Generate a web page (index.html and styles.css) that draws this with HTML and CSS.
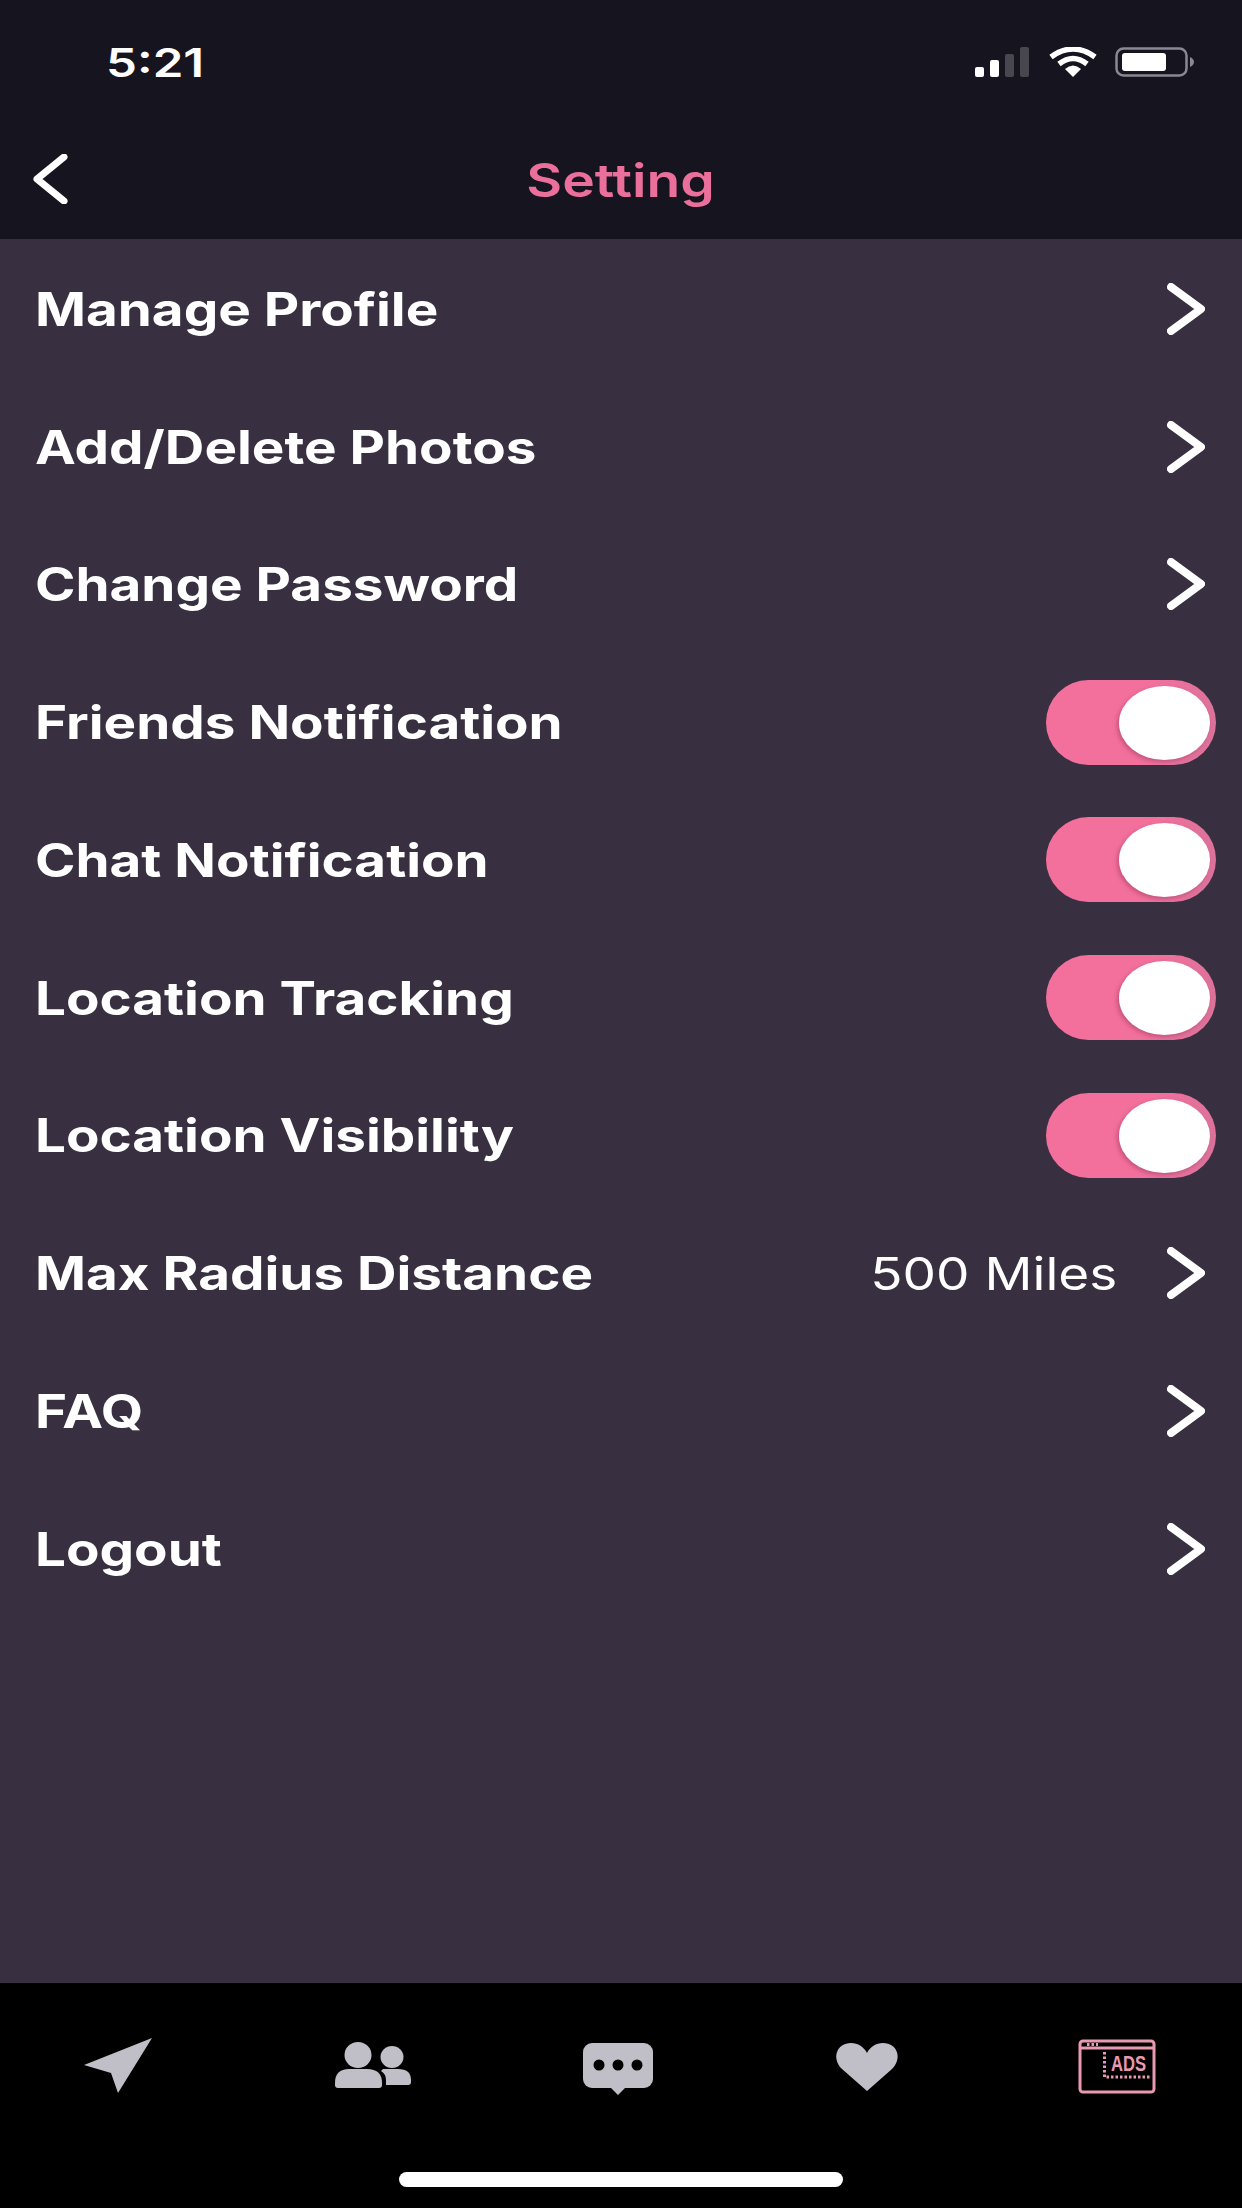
FILE: index.html
```html
<!DOCTYPE html>
<html lang="en">
<head>
    <meta charset="UTF-8">
    <meta name="viewport" content="width=device-width, initial-scale=1.0">
    <title>Setting</title>
    <link rel="stylesheet" href="styles.css">
</head>
<body>
    <div class="app">
        <header class="header">
            <div class="status-bar">
                <span class="time">5:21</span>
                <div class="status-icons">
                    <svg class="signal" viewBox="0 0 56 30">
                        <rect x="0" y="20" width="9" height="10" rx="2" fill="#fff"/>
                        <rect x="15" y="13" width="9" height="17" rx="2" fill="#fff"/>
                        <rect x="30" y="7" width="9" height="23" rx="2" fill="#48464f"/>
                        <rect x="45" y="0" width="9" height="30" rx="2" fill="#48464f"/>
                    </svg>
                    <svg class="wifi" viewBox="0 0 50 30">
                        <path d="M3 10 Q25 -6 47 10" fill="none" stroke="#fff" stroke-width="5.5"/>
                        <path d="M11 17 Q25 6 39 17" fill="none" stroke="#fff" stroke-width="5.5"/>
                        <path d="M17 22 Q25 15 33 22 L25 30 Z" fill="#fff"/>
                    </svg>
                    <svg class="battery" viewBox="0 0 80 30">
                        <rect x="1.5" y="1.5" width="70" height="27" rx="7" fill="none" stroke="#8a8890" stroke-width="2.5"/>
                        <rect x="7" y="6" width="44" height="18" rx="3" fill="#fff"/>
                        <path d="M75 10 Q79 12 79 15 Q79 18 75 20 Z" fill="#8a8890"/>
                    </svg>
                </div>
            </div>
            <nav class="nav-bar">
                <svg class="back" viewBox="0 0 36 50">
                    <path d="M32 3 L5 25 L32 47" fill="none" stroke="#fff" stroke-width="7" stroke-linecap="round" stroke-linejoin="round"/>
                </svg>
                <h1 class="title">Setting</h1>
            </nav>
        </header>

        <main class="settings">
            <div class="row">
                <span class="label">Manage Profile</span>
                <svg class="chevron" viewBox="0 0 38 52"><path d="M4 4 L34 26 L4 48"/></svg>
            </div>
            <div class="row">
                <span class="label">Add/Delete Photos</span>
                <svg class="chevron" viewBox="0 0 38 52"><path d="M4 4 L34 26 L4 48"/></svg>
            </div>
            <div class="row">
                <span class="label">Change Password</span>
                <svg class="chevron" viewBox="0 0 38 52"><path d="M4 4 L34 26 L4 48"/></svg>
            </div>
            <div class="row">
                <span class="label">Friends Notification</span>
                <div class="toggle"><div class="knob"></div></div>
            </div>
            <div class="row">
                <span class="label">Chat Notification</span>
                <div class="toggle"><div class="knob"></div></div>
            </div>
            <div class="row">
                <span class="label">Location Tracking</span>
                <div class="toggle"><div class="knob"></div></div>
            </div>
            <div class="row">
                <span class="label">Location Visibility</span>
                <div class="toggle"><div class="knob"></div></div>
            </div>
            <div class="row">
                <span class="label">Max Radius Distance</span>
                <span class="value">500 Miles</span>
                <svg class="chevron" viewBox="0 0 38 52"><path d="M4 4 L34 26 L4 48"/></svg>
            </div>
            <div class="row">
                <span class="label">FAQ</span>
                <svg class="chevron" viewBox="0 0 38 52"><path d="M4 4 L34 26 L4 48"/></svg>
            </div>
            <div class="row">
                <span class="label">Logout</span>
                <svg class="chevron" viewBox="0 0 38 52"><path d="M4 4 L34 26 L4 48"/></svg>
            </div>
        </main>

        <footer class="tab-bar">
            <div class="tabs">
                <svg class="tab-icon" viewBox="0 0 90 60">
                    <path class="fill" d="M79 2 L11 29 L38 37 L45 57 Z"/>
                </svg>
                <svg class="tab-icon" viewBox="0 0 90 60">
                    <ellipse class="fill" cx="35" cy="19" rx="13.5" ry="13"/>
                    <ellipse class="fill" cx="69" cy="21" rx="11.5" ry="11"/>
                    <path class="fill" d="M12 47 Q12 33 26 33 L44 33 Q59 33 59 47 L59 49 Q59 52 56 52 L15 52 Q12 52 12 49 Z"/>
                    <path class="fill" d="M60 33 L75 33 Q88 33 88 44 L88 46 Q88 49 85 49 L63 49 L63 44 Q63 38 58 35 Z"/>
                </svg>
                <svg class="tab-icon" viewBox="0 0 90 60">
                    <rect class="fill" x="10" y="7" width="70" height="45" rx="9"/>
                    <path class="fill" d="M37 51 L53 51 L45 59 Z"/>
                    <circle cx="26" cy="29" r="5.5"/>
                    <circle cx="45" cy="29" r="5.5"/>
                    <circle cx="64" cy="29" r="5.5"/>
                </svg>
                <svg class="tab-icon" viewBox="0 0 90 60">
                    <path class="fill" d="M45 55 L20 33 C9 22 15 7 29 7 C36 7 42 11 45 17 C48 11 54 7 61 7 C75 7 81 22 70 33 Z"/>
                </svg>
                <svg class="tab-icon" viewBox="0 0 90 60">
                    <rect class="ads-line" x="8" y="5" width="74" height="51" rx="3"/>
                    <path class="ads-line" d="M8 12 L82 12"/>
                    <path class="ads-dots" d="M15 8.5 L26 8.5"/>
                    <path class="ads-dots" d="M32.5 16 L32.5 41 L78 41"/>
                    <text class="ads-text" x="39" y="35" textLength="35" lengthAdjust="spacingAndGlyphs">ADS</text>
                </svg>
            </div>
            <div class="home-indicator"></div>
        </footer>
    </div>
</body>
</html>
```

FILE: styles.css
```css
* {
    box-sizing: border-box;
}

body {
    margin: 0;
    background-color: #000;
    font-family: Inter, 'Liberation Sans', sans-serif;
    color: #fff;
}

.app {
    display: flex;
    flex-direction: column;
    width: 1242px;
    height: 2208px;
    overflow: hidden;
}

.header {
    height: 239px;
    background-color: #16141f;
}

.status-bar {
    display: flex;
    justify-content: space-between;
    align-items: center;
    height: 124px;
    padding: 0 47px 0 106px;
}

/* the reference is stretched sideways, so the text is too */
.time {
    font-size: 40px;
    font-weight: 600;
    transform: scaleX(1.23);
    transform-origin: left center;
}

.status-icons {
    display: flex;
    align-items: center;
    gap: 17px;
}

.signal {
    width: 56px;
    height: 30px;
}

.wifi {
    width: 50px;
    height: 30px;
}

.battery {
    width: 80px;
    height: 30px;
}

.nav-bar {
    position: relative;
    display: flex;
    justify-content: center;
    align-items: center;
    height: 112px;
}

.back {
    position: absolute;
    left: 32px;
    top: 30px;
    width: 36px;
    height: 50px;
}

.title {
    margin: 0;
    font-size: 46px;
    font-weight: 600;
    color: #eb6f9b;
    transform: scaleX(1.2);
}

.settings {
    flex: 1;
    padding-top: 1px;
    background-color: #382f40;
}

.row {
    display: flex;
    align-items: center;
    height: 137.75px;
    padding: 0 26px 0 35px;
}

.label {
    flex: 1;
    font-size: 46px;
    font-weight: 700;
    transform: scaleX(1.19);
    transform-origin: left center;
}

.value {
    margin-right: 50px;
    font-size: 45px;
    transform: scaleX(1.18);
    transform-origin: right center;
}

.chevron {
    width: 38px;
    height: 52px;
    margin-right: 11px;
    fill: none;
    stroke: #fff;
    stroke-width: 8;
    stroke-linecap: round;
    stroke-linejoin: round;
}

.toggle {
    position: relative;
    width: 170px;
    height: 85px;
    border-radius: 43px;
    background: linear-gradient(100deg, #f4709c 55%, #d9729a 100%);
}

.knob {
    position: absolute;
    top: 6px;
    right: 6px;
    width: 91px;
    height: 74px;
    border-radius: 50%;
    background-color: #fff;
    box-shadow: -2px 2px 4px rgba(120, 30, 70, 0.35);
}

.tab-bar {
    display: flex;
    flex-direction: column;
    height: 225px;
    background-color: #000;
}

.tabs {
    display: flex;
    justify-content: space-between;
    padding: 53px 80px 0 73px;
}

.tab-icon {
    width: 90px;
    height: 60px;
}

.fill {
    fill: #c0bec6;
}

.ads-line {
    fill: none;
    stroke: #e99ab2;
    stroke-width: 3;
}

.ads-dots {
    fill: none;
    stroke: #e99ab2;
    stroke-width: 3;
    stroke-dasharray: 2.5 2;
}

.ads-text {
    font-family: 'Liberation Sans', sans-serif;
    font-size: 22px;
    font-weight: 700;
    fill: #e99ab2;
}

.home-indicator {
    width: 444px;
    height: 15px;
    margin: 76px auto 0;
    border-radius: 8px;
    background-color: #fff;
}
```
